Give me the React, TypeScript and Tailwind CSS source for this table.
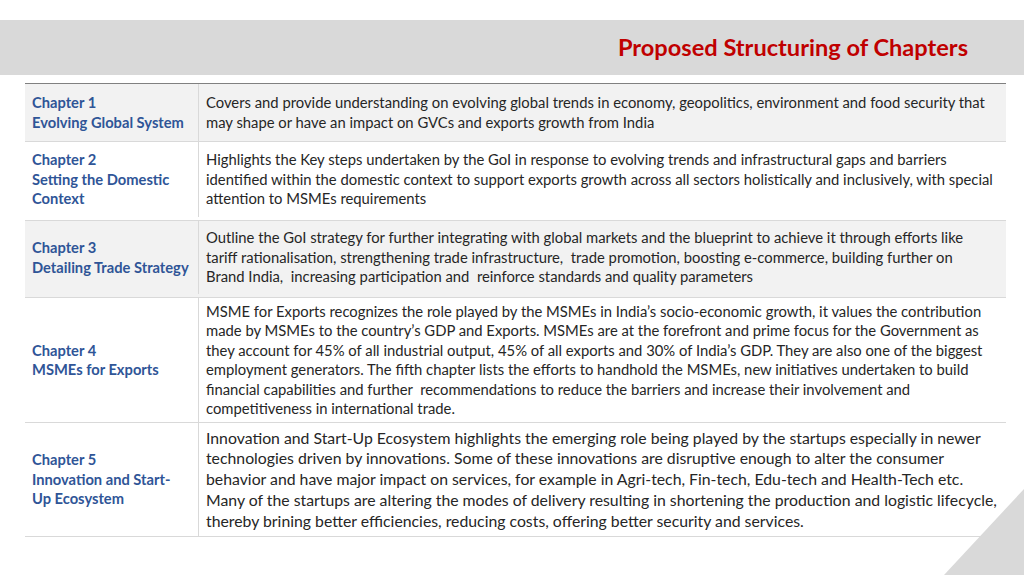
import React from 'react';

type Row = {
  title: string[];
  lines: string[];
  height: string;
  shaded: boolean;
  big?: boolean;
};

const rows: Row[] = [
  {
    title: ['Chapter 1', 'Evolving Global System'],
    lines: [
      'Covers and provide understanding on evolving global trends in economy, geopolitics, environment and food security that',
      'may shape or have an impact on GVCs and exports growth from India',
    ],
    height: 'h-[58px]',
    shaded: true,
  },
  {
    title: ['Chapter 2', 'Setting the Domestic', 'Context'],
    lines: [
      'Highlights the Key steps undertaken by the GoI in response to evolving trends and infrastructural gaps and barriers',
      'identified within the domestic context to support exports growth across all sectors holistically and inclusively, with special',
      'attention to MSMEs requirements',
    ],
    height: 'h-[79px] pb-[3px]',
    shaded: false,
  },
  {
    title: ['Chapter 3', 'Detailing Trade Strategy'],
    lines: [
      'Outline the GoI strategy for further integrating with global markets and the blueprint to achieve it through efforts like',
      'tariff rationalisation, strengthening trade infrastructure,  trade promotion, boosting e-commerce, building further on',
      'Brand India,  increasing participation and  reinforce standards and quality parameters',
    ],
    height: 'h-[77px] pb-[3px]',
    shaded: true,
  },
  {
    title: ['Chapter 4', 'MSMEs for Exports'],
    lines: [
      'MSME for Exports recognizes the role played by the MSMEs in India\u2019s socio-economic growth, it values the contribution',
      'made by MSMEs to the country\u2019s GDP and Exports. MSMEs are at the forefront and prime focus for the Government as',
      'they account for 45% of all industrial output, 45% of all exports and 30% of India\u2019s GDP. They are also one of the biggest',
      'employment generators. The fifth chapter lists the efforts to handhold the MSMEs, new initiatives undertaken to build',
      'financial capabilities and further  recommendations to reduce the barriers and increase their involvement and',
      'competitiveness in international trade.',
    ],
    height: 'h-[125px]',
    shaded: false,
  },
  {
    title: ['Chapter 5', 'Innovation and Start-', 'Up Ecosystem'],
    lines: [
      'Innovation and Start-Up Ecosystem highlights the emerging role being played by the startups especially in newer',
      'technologies driven by innovations. Some of these innovations are disruptive enough to alter the consumer',
      'behavior and have major impact on services, for example in Agri-tech, Fin-tech, Edu-tech and Health-Tech etc.',
      'Many of the startups are altering the modes of delivery resulting in shortening the production and logistic lifecycle,',
      'thereby brining better efficiencies, reducing costs, offering better security and services.',
    ],
    height: 'h-[114px]',
    shaded: false,
    big: true,
  },
];

export default function App() {
  return (
    <div className="relative w-[1024px] h-[575px] overflow-hidden bg-white font-['Lato',sans-serif]">
      {/* header band */}
      <div className="pt-5">
        <div className="h-[55px] bg-[#d9d9d9] flex items-center justify-end pr-[56px]">
          <h1 className="text-[23.6px] font-bold text-[#c00000] leading-none">Proposed Structuring of Chapters</h1>
        </div>
      </div>

      {/* chapters table */}
      <div className="mt-2 ml-[25px] w-[981px] border-t border-[#808080]">
        {rows.map((row) => (
          <div
            key={row.title[0]}
            className={`grid grid-cols-[174px_1fr] border-b border-[#d9d9d9] ${row.height} ${row.shaded ? 'bg-[#f2f2f2]' : 'bg-white'}`}
          >
            <div className="flex flex-col justify-center pl-[7px] border-r border-[#d9d9d9] text-[14.7px] leading-[19.5px] font-bold text-[#2f5597]">
              {row.title.map((t) => (
                <span key={t} className="whitespace-nowrap">{t}</span>
              ))}
            </div>
            <div
              className={`flex flex-col justify-center pl-[7px] text-[#262626] ${row.big ? 'text-[15.8px] leading-[20.8px]' : 'text-[14.8px] leading-[19.5px]'}`}
            >
              {row.lines.map((l, i) => (
                <span key={i} className="whitespace-pre">{l}</span>
              ))}
            </div>
          </div>
        ))}
      </div>

      {/* corner triangle */}
      <svg className="absolute right-0 bottom-0" width="80" height="86" viewBox="0 0 80 86">
        <polygon points="0,86 80,86 80,0" fill="#d9d9d9" />
      </svg>
    </div>
  );
}
